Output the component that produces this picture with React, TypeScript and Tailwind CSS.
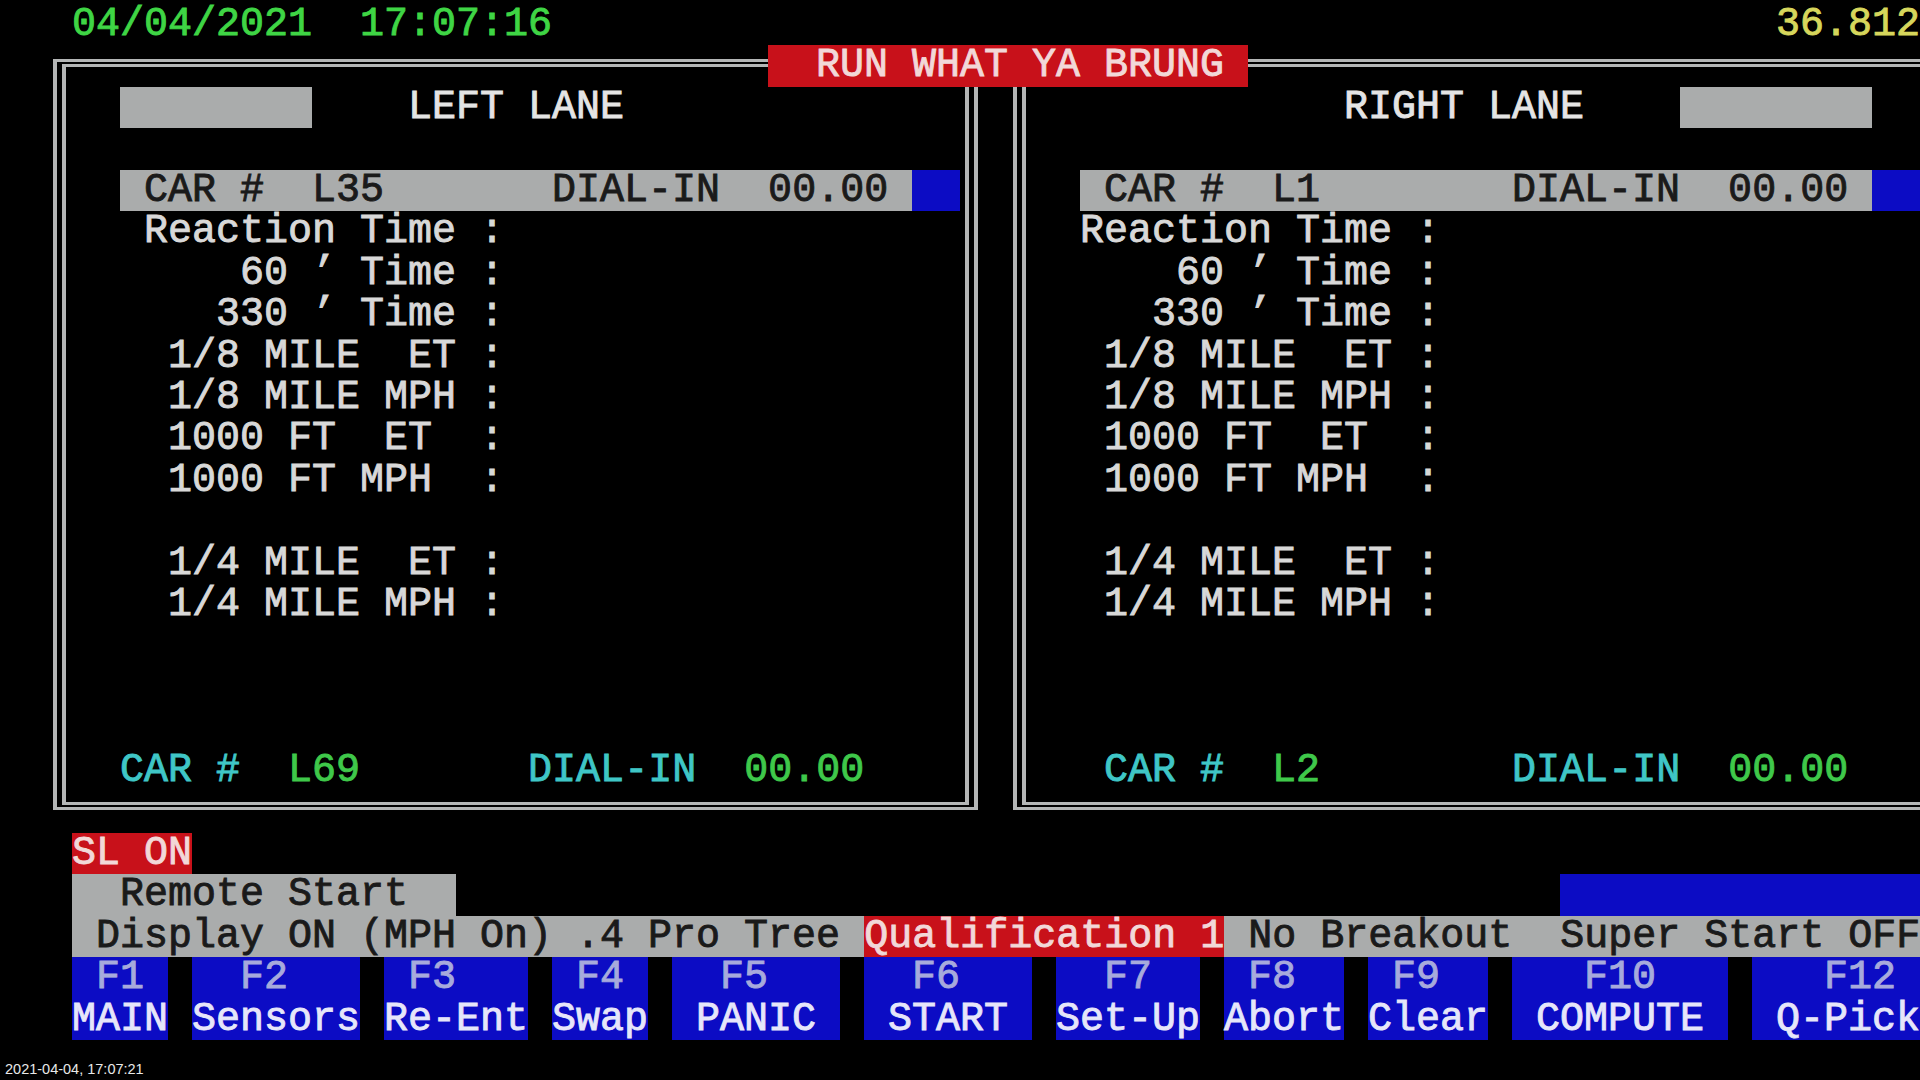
import React from 'react';

// 80x25 text-mode screen: every cell is 24px wide and 41.44px tall.
const GRAY = 'bg-[#aaacac] text-[#1a1a1a]';
const RED = 'bg-[#c8111a] text-[#f2d8d8]';
const BLUE = 'bg-[#0c0cc4]';
const CYAN = 'text-[#3fc6c6]';
const GREEN = 'text-[#3fc84a]';

const LABELS = [
    'Reaction Time :',
    '    60 ’ Time :',
    '   330 ’ Time :',
    ' 1/8 MILE  ET :',
    ' 1/8 MILE MPH :',
    ' 1000 FT  ET  :',
    ' 1000 FT MPH  :',
    '',
    ' 1/4 MILE  ET :',
    ' 1/4 MILE MPH :',
];

const FKEYS = [
    { key: ' F1 ', label: 'MAIN', w: 'w-[96px]' },
    { key: '  F2   ', label: 'Sensors', w: 'w-[168px]' },
    { key: ' F3   ', label: 'Re-Ent', w: 'w-[144px]' },
    { key: ' F4 ', label: 'Swap', w: 'w-[96px]' },
    { key: '  F5   ', label: ' PANIC ', w: 'w-[168px]' },
    { key: '  F6   ', label: ' START ', w: 'w-[168px]' },
    { key: '  F7  ', label: 'Set-Up', w: 'w-[144px]' },
    { key: ' F8  ', label: 'Abort', w: 'w-[120px]' },
    { key: ' F9  ', label: 'Clear', w: 'w-[120px]' },
    { key: '   F10   ', label: ' COMPUTE ', w: 'w-[216px]' },
    { key: '   F12 ', label: ' Q-Pick', w: 'w-[168px]' },
];

const Row: React.FC<{ children?: React.ReactNode; className?: string }> = ({ children, className = '' }) => (
    <div className={`h-[41.44px] whitespace-pre flex ${className}`}>{children}</div>
);

type LaneProps = {
    side: 'left' | 'right';
    car: string;
    nextCar: string;
    className?: string;
};

const Lane: React.FC<LaneProps> = ({ side, car, nextCar, className = '' }) => {
    const isLeft = side === 'left';
    const labelIndent = isLeft ? '   ' : '  ';

    return (
        <div className={`w-[925px] h-[751px] shrink-0 border-x-[13px] border-y-[8px] border-double border-[#b4b6b6] pl-[6px] pt-[20px] ${className}`}>
            {isLeft ? (
                <Row>
                    <span>{'  '}</span>
                    <span className={`${GRAY} w-[192px]`}></span>
                    <span className="text-[#e4e4e4]">{'    LEFT LANE'}</span>
                </Row>
            ) : (
                <Row>
                    <span className="text-[#e4e4e4]">{'             RIGHT LANE    '}</span>
                    <span className={`${GRAY} w-[192px]`}></span>
                </Row>
            )}
            <Row />
            <Row>
                <span>{'  '}</span>
                <span className={GRAY}>{` CAR #  ${car.padEnd(10, ' ')}DIAL-IN  00.00 `}</span>
                <span className={`${BLUE} w-[48px]`}></span>
            </Row>
            {LABELS.map((label, i) => (
                <Row key={i} className="text-[#d8d8d8]">
                    {label ? labelIndent + label : ''}
                </Row>
            ))}
            <Row />
            <Row />
            <Row />
            <Row>
                <span>{isLeft ? '  ' : '   '}</span>
                <span className={CYAN}>CAR #</span>
                <span>{'  '}</span>
                <span className={GREEN}>{nextCar.padEnd(10, ' ')}</span>
                <span className={CYAN}>DIAL-IN</span>
                <span>{'  '}</span>
                <span className={GREEN}>00.00</span>
            </Row>
        </div>
    );
};

const App: React.FC = () => {
    return (
        <div className="relative w-[1920px] h-[1080px] overflow-hidden bg-black pt-[4px] font-['Liberation_Mono','DejaVu_Sans_Mono',monospace] text-[40px] leading-[41.44px] [-webkit-text-stroke:0.9px_currentcolor]">
            {/* row 0: clock and timer */}
            <Row className="justify-between pl-[72px]">
                <span className="text-[#3fd545]">{'04/04/2021  17:07:16'}</span>
                <span className="text-[#d6d65c]">36.812</span>
            </Row>

            {/* rows 1-19: lanes */}
            <div className="relative h-[787.36px]">
                <div className="flex pt-[13.5px]">
                    <Lane side="left" car="L35" nextCar="L69" className="ml-[53px]" />
                    <Lane side="right" car="L1" nextCar="L2" className="ml-[35px]" />
                </div>
                <div className={`absolute left-[768px] top-0 w-[480px] h-[41.44px] whitespace-pre ${RED}`}>
                    {'  RUN WHAT YA BRUNG '}
                </div>
            </div>

            {/* rows 20-22: status */}
            <Row className="pl-[72px]">
                <span className={RED}>SL ON</span>
            </Row>
            <Row className="pl-[72px]">
                <span className={GRAY}>{'  Remote Start  '}</span>
                <span className={`${BLUE} ml-auto w-[360px]`}></span>
            </Row>
            <Row className="pl-[72px]">
                <span className={GRAY}>{' Display ON (MPH On) .4 Pro Tree '}</span>
                <span className={RED}>Qualification 1</span>
                <span className={GRAY}>{' No Breakout  Super Start OFF'}</span>
            </Row>

            {/* rows 23-24: function keys */}
            <div className="flex gap-[24px] pl-[72px]">
                {FKEYS.map(f => (
                    <div key={f.key} className={`${BLUE} ${f.w} h-[82.88px] whitespace-pre`}>
                        <div className="h-[41.44px] text-[#a7aadc]">{f.key}</div>
                        <div className="h-[41.44px] text-[#e6e6fa]">{f.label}</div>
                    </div>
                ))}
            </div>

            <div className="pl-[5px] pt-[21px] font-['Liberation_Sans',sans-serif] text-[14.5px] leading-[16px] text-[#e8e8e8] [-webkit-text-stroke:0px]">
                2021-04-04, 17:07:21
            </div>
        </div>
    );
};

export default App;
